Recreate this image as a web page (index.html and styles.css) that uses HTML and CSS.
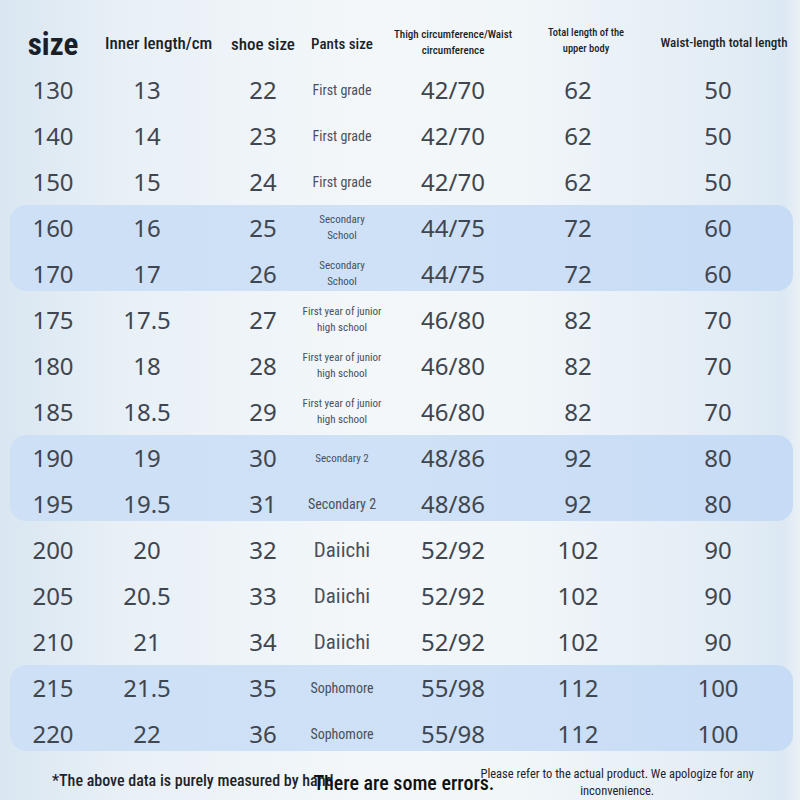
FILE: index.html
```html
<!DOCTYPE html>
<html lang="en">
<head>
<meta charset="utf-8">
<title>Size chart</title>
<link rel="stylesheet" href="styles.css">
</head>
<body>
<div class="page">
  <div class="grid head">
    <div class="cell h-size">size</div>
    <div class="cell h-inner">Inner length/cm</div>
    <div class="cell c3 h-shoe">shoe size</div>
    <div class="cell h-pants">Pants size</div>
    <div class="cell h-small">Thigh circumference/Waist<br>circumference</div>
    <div class="cell h-small h-upper">Total length of the<br>upper body</div>
    <div class="cell h-waist">Waist-length total length</div>
  </div>

  <div class="grid row"><div class="cell num">130</div><div class="cell num">13</div><div class="cell num c3">22</div><div class="cell p-md">First grade</div><div class="cell num">42/70</div><div class="cell num">62</div><div class="cell num">50</div></div>
  <div class="grid row"><div class="cell num">140</div><div class="cell num">14</div><div class="cell num c3">23</div><div class="cell p-md">First grade</div><div class="cell num">42/70</div><div class="cell num">62</div><div class="cell num">50</div></div>
  <div class="grid row"><div class="cell num">150</div><div class="cell num">15</div><div class="cell num c3">24</div><div class="cell p-md">First grade</div><div class="cell num">42/70</div><div class="cell num">62</div><div class="cell num">50</div></div>

  <div class="band">
    <div class="grid row"><div class="cell num">160</div><div class="cell num">16</div><div class="cell num c3">25</div><div class="cell p-sm">Secondary<br>School</div><div class="cell num">44/75</div><div class="cell num">72</div><div class="cell num">60</div></div>
    <div class="grid row"><div class="cell num">170</div><div class="cell num">17</div><div class="cell num c3">26</div><div class="cell p-sm">Secondary<br>School</div><div class="cell num">44/75</div><div class="cell num">72</div><div class="cell num">60</div></div>
  </div>

  <div class="grid row"><div class="cell num">175</div><div class="cell num">17.5</div><div class="cell num c3">27</div><div class="cell p-sm">First year of junior<br>high school</div><div class="cell num">46/80</div><div class="cell num">82</div><div class="cell num">70</div></div>
  <div class="grid row"><div class="cell num">180</div><div class="cell num">18</div><div class="cell num c3">28</div><div class="cell p-sm">First year of junior<br>high school</div><div class="cell num">46/80</div><div class="cell num">82</div><div class="cell num">70</div></div>
  <div class="grid row"><div class="cell num">185</div><div class="cell num">18.5</div><div class="cell num c3">29</div><div class="cell p-sm">First year of junior<br>high school</div><div class="cell num">46/80</div><div class="cell num">82</div><div class="cell num">70</div></div>

  <div class="band">
    <div class="grid row"><div class="cell num">190</div><div class="cell num">19</div><div class="cell num c3">30</div><div class="cell p-xs">Secondary 2</div><div class="cell num">48/86</div><div class="cell num">92</div><div class="cell num">80</div></div>
    <div class="grid row"><div class="cell num">195</div><div class="cell num">19.5</div><div class="cell num c3">31</div><div class="cell p-md">Secondary 2</div><div class="cell num">48/86</div><div class="cell num">92</div><div class="cell num">80</div></div>
  </div>

  <div class="grid row"><div class="cell num">200</div><div class="cell num">20</div><div class="cell num c3">32</div><div class="cell p-lg">Daiichi</div><div class="cell num">52/92</div><div class="cell num">102</div><div class="cell num">90</div></div>
  <div class="grid row"><div class="cell num">205</div><div class="cell num">20.5</div><div class="cell num c3">33</div><div class="cell p-lg">Daiichi</div><div class="cell num">52/92</div><div class="cell num">102</div><div class="cell num">90</div></div>
  <div class="grid row"><div class="cell num">210</div><div class="cell num">21</div><div class="cell num c3">34</div><div class="cell p-lg">Daiichi</div><div class="cell num">52/92</div><div class="cell num">102</div><div class="cell num">90</div></div>

  <div class="band">
    <div class="grid row"><div class="cell num">215</div><div class="cell num">21.5</div><div class="cell num c3">35</div><div class="cell p-md">Sophomore</div><div class="cell num">55/98</div><div class="cell num">112</div><div class="cell num">100</div></div>
    <div class="grid row"><div class="cell num">220</div><div class="cell num">22</div><div class="cell num c3">36</div><div class="cell p-md">Sophomore</div><div class="cell num">55/98</div><div class="cell num">112</div><div class="cell num">100</div></div>
  </div>

  <div class="foot">
    <div class="f1">*The above data is purely measured by hand</div>
    <div class="f2">There are some errors.</div>
    <div class="f3">Please refer to the actual product. We apologize for any<br>inconvenience.</div>
  </div>
</div>
</body>
</html>
```

FILE: styles.css
```css
* { box-sizing: border-box; }
html, body { margin: 0; padding: 0; }
body {
  width: 800px;
  height: 800px;
  overflow: hidden;
  background: linear-gradient(90deg, #d9e6f1 0%, #e8f0f6 15%, #f3f7fa 45%, #f1f6f9 65%, #e2ecf5 92%, #dce8f3 98%, #eaf1f6 100%);
  font-family: "Noto Sans", "Open Sans", sans-serif;
}
.page { width: 800px; height: 800px; }
.grid {
  display: grid;
  grid-template-columns: 86px 102px 100px 88px 134px 116px 164px;
  padding-left: 10px;
  align-items: center;
}
.cell { justify-self: center; text-align: center; white-space: nowrap; }
.c3 { justify-self: stretch; padding-left: 30px; }

.head { height: 67px; padding-top: 18px; align-items: center; }
.head .cell {
  font-family: "Roboto Condensed", "Liberation Sans Narrow", "DejaVu Sans Condensed", "Roboto", sans-serif;
  font-stretch: condensed;
  color: #1b1f27;
  font-weight: 500;
}
.h-size { font-size: 31px; font-weight: 700 !important; line-height: 40px; margin-top: 4px; }
.h-inner { font-size: 17px; justify-self: start; margin-left: 9px; }
.h-shoe { font-size: 17px; margin-top: 2px; }
.h-pants { font-size: 15px; margin-top: 2px; }
.h-small { font-size: 11px; line-height: 16px; }
.h-upper { font-size: 10.5px; margin-left: 16px; margin-top: -4px; }
.h-waist { font-size: 13px; margin-left: 12px; }

.row { height: 46px; }
.num {
  font-size: 24px;
  color: #40464f;
  line-height: 30px;
}
.p-md, .p-sm, .p-xs, .p-lg {
  font-family: "Roboto Condensed", "Liberation Sans Narrow", "DejaVu Sans Condensed", "Roboto", sans-serif;
  font-stretch: condensed;
  color: #4a505a;
}
.p-md { font-size: 14px; }
.p-sm { font-size: 11px; line-height: 16px; }
.p-xs { font-size: 11px; }
.p-lg { font-size: 21px; font-weight: 400; }

.band {
  height: 86px;
  margin: 0 7px 6px 10px;
  border-radius: 16px;
  background: linear-gradient(90deg, #cee0f6 0%, #cfe1f6 50%, #c6dbf5 100%);
}
.band .grid { margin-left: -10px; }

.foot {
  display: flex;
  align-items: flex-start;
  padding-left: 52px;
  padding-top: 8px;
  font-family: "Roboto Condensed", "Liberation Sans Narrow", "DejaVu Sans Condensed", "Roboto", sans-serif;
  font-stretch: condensed;
}
.f1 { font-size: 16px; color: #1f232b; margin-top: 6px; font-weight: 500; }
.f2 { font-size: 20px; color: #111; margin-left: -20px; margin-top: 6px; font-weight: 500; }
.f3 { font-size: 12.5px; color: #1f232b; text-align: center; line-height: 17px; margin-left: -14px; }
```
